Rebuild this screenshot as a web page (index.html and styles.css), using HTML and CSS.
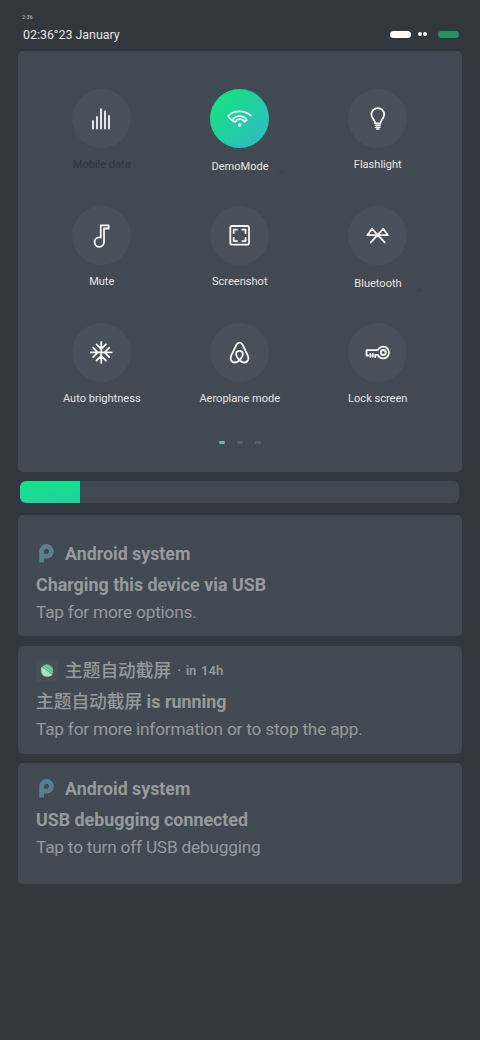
FILE: index.html
```html
<!DOCTYPE html>
<html lang="en">
<head>
<meta charset="utf-8">
<title>Quick settings</title>
<link rel="stylesheet" href="styles.css">
</head>
<body>
<div class="clock">2:36</div>
<header class="status">
  <span class="date">02:36°23 January</span>
  <span class="indicators"><i class="pill"></i><i class="dot"></i><i class="dot"></i><i class="pill green"></i></span>
</header>
<main>
  <section class="panel">
    <div class="tiles">
      <div class="tile off"><div class="disc"><svg viewBox="0 0 59 59"><path d="M21 39.500v-7.500M25 39.500v-11.500M29 39.500v-19.300M33 39.500v-17M37 39.500v-12.500"/></svg></div><span>Mobile data</span></div>
      <div class="tile low"><div class="disc on"><svg viewBox="0 0 59 59"><path d="M41 26.700C34.500 20.800 24 21 18.700 26.300Q18 27 18.700 28L22 31.500C25.800 25.800 33.500 25.500 36.700 31L34.500 32.800C32.300 29.300 27.800 29.300 25.200 33L22 31.500"/><circle class="fill" cx="29.700" cy="36" r="1.700"/></svg></div><span>DemoMode</span></div>
      <div class="tile"><div class="disc"><svg viewBox="0 0 59 59"><path d="M27.200 34.500C27.200 31 23.400 29.500 23.400 25.500A6.400 6.400 0 0 1 36.200 25.500C36.200 29.500 32.400 31 32.400 34.500Z"/><path class="thin" d="M27.500 36.500h4.600M27.500 38.300h4.600M28.500 40h2.600"/></svg></div><span>Flashlight</span></div>
      <div class="tile"><div class="disc"><svg viewBox="0 0 59 59"><path d="M28.800 31.500V19.300H36.600V22.500H32V36A4.700 4.700 0 1 1 27.200 31.400"/></svg></div><span>Mute</span></div>
      <div class="tile"><div class="disc"><svg viewBox="0 0 59 59"><rect x="20.300" y="20" width="18.700" height="18.700" rx="2"/><path d="M23.700 27v-3.300H27M32.300 23.700h3.300V27M35.600 31.800v3.300h-3.300M27 35.100h-3.300v-3.300"/></svg></div><span>Screenshot</span></div>
      <div class="tile low"><div class="disc"><svg viewBox="0 0 59 59"><path d="M22.800 36.300L35.200 22.800L39.900 29.200H19.300L24 22.800L36.700 36.300"/></svg></div><span>Bluetooth</span></div>
      <div class="tile"><div class="disc"><svg viewBox="0 0 59 59"><path d="M29.200 18.900v21M18.700 29.400h21M24.500 21.300l4.700 4.700 4.700-4.700M24.500 37.500l4.700-4.700 4.700 4.700M21.100 24.700l4.700 4.700-4.700 4.700M37.300 24.700l-4.700 4.700 4.700 4.700"/></svg></div><span>Auto brightness</span></div>
      <div class="tile"><div class="disc"><svg viewBox="0 0 59 59"><path d="M29.500 37.200C26.500 34 25.800 32 26.200 30.300C26.900 27 32.100 27 32.800 30.300C33.200 32 32.500 34 29.500 37.200C26.500 40.500 22.500 40 21 37.200C20.200 35.500 20.500 34.200 21.200 32.700L26.500 21.600C27.800 18.900 31.200 18.900 32.500 21.600L37.800 32.700C38.500 34.200 38.800 35.500 38 37.200C36.500 40 32.500 40.500 29.500 37.200Z"/></svg></div><span>Aeroplane mode</span></div>
      <div class="tile"><div class="disc"><svg viewBox="0 0 59 59"><circle cx="35.300" cy="29.500" r="2.500"/><path d="M29.700 27.200A5.900 5.900 0 1 1 29.700 31.800H27.200V34M29.700 27.200H18.500V32.500H20.400M22.400 31V33.800M24.800 31V33.800"/></svg></div><span>Lock screen</span></div>
    </div>
    <div class="pager"><i class="current"></i><i></i><i></i></div>
  </section>
  <div class="slider"><div class="level"></div></div>
  <article class="card tall first">
    <div class="app"><svg class="logo" viewBox="0 0 22 22"><path d="M5.600 19.500V8.300A4.900 4.900 0 1 1 10.500 13.200H7"/></svg><b>Android system</b></div>
    <h2>Charging this device via USB</h2>
    <p>Tap for more options.</p>
  </article>
  <article class="card short">
    <div class="app"><svg class="logo" viewBox="0 0 22 22"><rect width="22" height="22" rx="4" fill="#484e58"/><circle cx="11" cy="10.500" r="6.200" fill="#51b992"/><path class="light" d="M5.200 7L16.500 15Q11 18 6.500 15Q5 11.500 5.200 7Z"/><path class="ray" d="M7 6l9.500 7M10 5l6.500 5"/></svg><b class="cjk">主题自动截屏</b><small>· in 14h</small></div>
    <h2><span class="cjk">主题自动截屏</span> is running</h2>
    <p>Tap for more information or to stop the app.</p>
  </article>
  <article class="card tall last">
    <div class="app"><svg class="logo" viewBox="0 0 22 22"><path d="M5.600 19.500V8.300A4.900 4.900 0 1 1 10.500 13.200H7"/></svg><b>Android system</b></div>
    <h2>USB debugging connected</h2>
    <p>Tap to turn off USB debugging</p>
  </article>
</main>
</body>
</html>
```
FILE: styles.css
```css
* { box-sizing: border-box; }
body {
  margin: 0;
  height: 1040px;
  background: #30373d;
  color: #e4e6e7;
  font-family: Roboto, "Noto Sans CJK SC", sans-serif;
  overflow: hidden;
}
.clock { height: 27px; padding: 14px 0 0 22px; font-size: 5.500px; line-height: 7px; color: #c6c9cb; }
.status { height: 24px; padding: 0 21px 0 23px; display: flex; justify-content: space-between; }
.date { font-size: 12.400px; line-height: 16px; }
.indicators { display: flex; align-items: center; height: 14px; }
.pill { width: 21px; height: 7px; border-radius: 4px; background: #fff; }
.pill.green { background: #239465; margin-left: 11px; }
.dot { width: 4px; height: 4px; border-radius: 50%; background: #f3f4f4; margin-left: 1px; }
.pill + .dot { margin-left: 7px; }
main { padding: 0 18px; }
.panel { height: 420.500px; padding: 37.500px 15px 0 14.500px; border-radius: 5px; background: #414952; }
.tiles { display: grid; grid-template-columns: repeat(3, 138px); grid-auto-rows: 117.400px; }
.tile { position: relative; display: flex; flex-direction: column; align-items: center; font-size: 11.050px; line-height: 14px; white-space: nowrap; }
.tile span { margin-top: 10px; padding-left: .5px; }
.tile.low span { margin-top: 12px; padding-left: 1px; }
.tile.off span { color: #30373e; }
/* expand marker in the lower right corner */
.tile.low::after {
  content: "";
  position: absolute;
  left: 106px;
  top: 79px;
  width: 7px;
  height: 7px;
  background: #3e464f;
  clip-path: polygon(100% 0, 100% 100%, 0 100%);
}
.disc { width: 59px; height: 59px; border-radius: 50%; background: #485059; }
.disc.on { background: linear-gradient(135deg, #14e27f 12%, #2fbcc5 92%); }
.disc svg { display: block; width: 59px; height: 59px; fill: none; stroke: #f5f6f6; stroke-width: 1.800; stroke-linecap: round; stroke-linejoin: round; }
.disc .fill { fill: #fff; stroke: none; }
.disc .thin { stroke-width: 1.300; }
.pager { display: flex; justify-content: center; gap: 12px; padding-top: .3px; }
.pager i { width: 6px; height: 3px; border-radius: 1px; background: #50685f; }
.pager .current { background: #70b5a1; }
.slider { height: 22px; margin: 9.500px 3px 12.200px 2.300px; border-radius: 6px; background: #414952; overflow: hidden; }
.level { width: 60px; height: 22px; background: linear-gradient(170deg, #15e289 15%, #20cfa4); }
.card { padding: 14px 18px 0; margin-bottom: 9.200px; border-radius: 5px; background: #414952; color: #959b9d; }
.tall { height: 121.200px; }
.short { height: 108.200px; }
.first { padding-top: 27.500px; }
.last { padding-top: 14.800px; }
.app { display: flex; align-items: center; height: 22px; font-size: 17.800px; line-height: 22px; }
.app b { margin-left: 7px; font-weight: 700; }
.app small { margin-left: 6px; font-size: 13px; font-weight: 600; word-spacing: 1.500px; }
.app .cjk, .cjk { font-weight: 500; font-size: 17.700px; }
.logo { width: 22px; height: 22px; flex: none; fill: none; }
.logo path { stroke: #5c7f8d; stroke-width: 4.700; }
.logo .light { fill: #b7d9cb; stroke: none; }
.logo .ray { stroke: #c2ded3; stroke-width: .7; }
.card h2 { margin: 9px 0 0; font-size: 17.850px; line-height: 22px; font-weight: 700; }
.card p { margin: 5px 0 0; font-size: 17.300px; line-height: 22px; letter-spacing: -.22px; }
```
